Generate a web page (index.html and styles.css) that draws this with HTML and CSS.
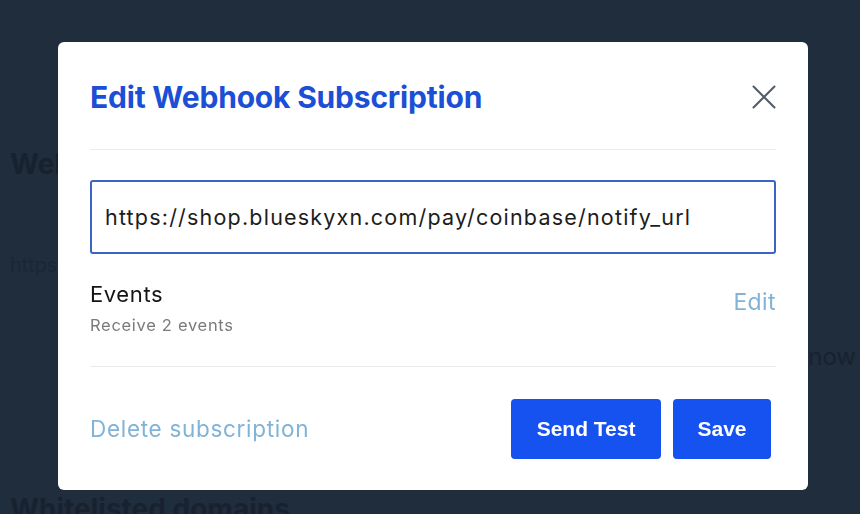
FILE: index.html
```html
<!DOCTYPE html>
<html lang="en">
<head>
<meta charset="utf-8">
<title>Edit Webhook Subscription</title>
<link rel="stylesheet" href="styles.css">
</head>
<body>
<main class="page">
  <h2 class="page-heading first">Webhook subscriptions</h2>
  <p class="page-url">https://shop.blueskyxn.com/pay/coinbase/notify_url</p>
  <p class="page-right">now</p>
  <h2 class="page-heading second">Whitelisted domains</h2>
</main>

<div class="overlay">
  <div class="modal" role="dialog" aria-labelledby="modal-title">
    <header class="modal-header">
      <h1 id="modal-title" class="modal-title">Edit Webhook Subscription</h1>
      <button class="close-btn" aria-label="Close">
        <svg width="24" height="24" viewBox="0 0 24 24" fill="none" stroke="#525c66" stroke-width="2" stroke-linecap="round">
          <path d="M1.5 1.5 L22.5 22.5 M22.5 1.5 L1.5 22.5"/>
        </svg>
      </button>
    </header>
    <section class="modal-body">
      <input class="url-input" type="text" value="https://shop.blueskyxn.com/pay/coinbase/notify_url">
      <div class="events-row">
        <div class="events-info">
          <div class="events-title">Events</div>
          <div class="events-sub">Receive 2 events</div>
        </div>
        <a class="link edit-link" href="#">Edit</a>
      </div>
    </section>
    <footer class="modal-footer">
      <a class="link delete-link" href="#">Delete subscription</a>
      <div class="actions">
        <button class="btn btn-test">Send Test</button>
        <button class="btn btn-save">Save</button>
      </div>
    </footer>
  </div>
</div>
</body>
</html>
```

FILE: styles.css
```css
* { box-sizing: border-box; }

html, body {
  margin: 0;
  height: 100%;
}

body {
  background: #1f2d3c;
  font-family: Inter, "Noto Sans", sans-serif;
  overflow: hidden;
}

.page {
  padding: 0 10px;
  color: #18222f;
}

.page-heading {
  margin: 0;
  font-size: 28px;
  font-weight: 700;
  line-height: 34px;
  white-space: nowrap;
}

.page-heading.first { padding-top: 147px; }

.page-url {
  margin: 0;
  padding-top: 71px;
  font-size: 20px;
  line-height: 26px;
  color: #1b2735;
  white-space: nowrap;
}

.page-right {
  margin: 0 -6px 0 0;
  padding-top: 64px;
  text-align: right;
  font-size: 24px;
  line-height: 30px;
}

.page-heading.second { padding-top: 120px; }

.overlay {
  position: fixed;
  inset: 0;
}

.modal {
  position: absolute;
  left: 58px;
  top: 42px;
  width: 750px;
  height: 448px;
  background: #ffffff;
  border-radius: 6px;
  padding: 0 32px;
  display: flex;
  flex-direction: column;
}

.modal-header {
  display: flex;
  align-items: center;
  justify-content: space-between;
  height: 108px;
  border-bottom: 1px solid #e9ebee;
  padding-top: 3px;
}

.modal-title {
  margin: 0;
  font-size: 30px;
  font-weight: 700;
  color: #1b4fd6;
  letter-spacing: -0.2px;
}

.close-btn {
  background: none;
  border: 0;
  padding: 0;
  width: 24px;
  height: 24px;
  cursor: pointer;
  display: flex;
}

.modal-body {
  padding: 30px 0 29px;
  border-bottom: 1px solid #e9ebee;
}

.url-input {
  display: block;
  width: 100%;
  height: 74px;
  border: 2px solid #3c64c2;
  border-radius: 3px;
  padding: 0 13px;
  font-family: Inter, "Noto Sans", sans-serif;
  font-size: 21.5px;
  letter-spacing: 1.2px;
  color: #1c1c1c;
  outline: none;
}

.events-row {
  display: flex;
  justify-content: space-between;
  align-items: flex-start;
  margin-top: 25px;
}

.events-title {
  font-size: 22px;
  line-height: 30px;
  letter-spacing: 0.6px;
  color: #141414;
}

.events-sub {
  margin-top: 4px;
  font-size: 16.5px;
  line-height: 24px;
  letter-spacing: 0.7px;
  color: #7a7a7a;
}

.link {
  color: #80b3d6;
  text-decoration: none;
}

.edit-link {
  font-size: 23px;
  line-height: 30px;
  letter-spacing: 0.4px;
  margin-top: 8px;
}

.modal-footer {
  flex: 1;
  display: flex;
  align-items: center;
  justify-content: space-between;
}

.delete-link {
  font-size: 22.5px;
  letter-spacing: 0.7px;
}

.actions {
  display: flex;
  gap: 12px;
  margin-right: 5px;
}

.btn {
  height: 60px;
  padding: 0 24px;
  border: 0;
  border-radius: 4px;
  background: #1652f0;
  color: #ffffff;
  font-family: "Liberation Sans", Arial, sans-serif;
  font-weight: 700;
  font-size: 21px;
  cursor: pointer;
}

.btn-test { padding: 0 25.5px; }
.btn-save { padding: 0 24.5px; }
```
